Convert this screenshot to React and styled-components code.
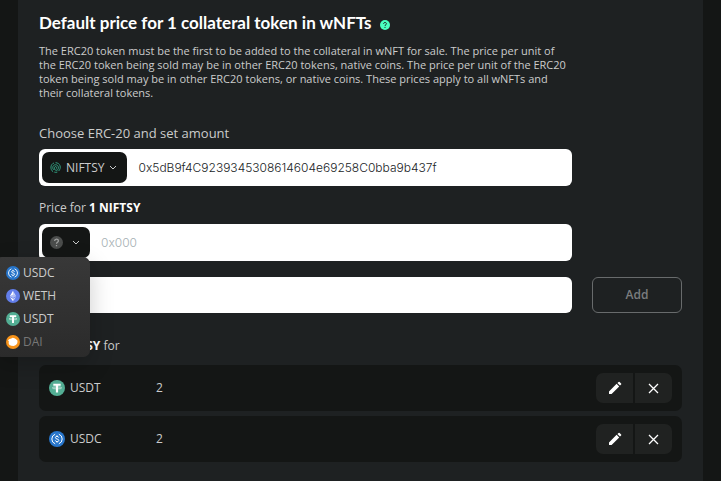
import React from "react";
import styled, { createGlobalStyle } from "styled-components";

const Global = createGlobalStyle`
  * { box-sizing: border-box; }
  body {
    margin: 0;
    background: #141615;
    color: #cbcccc;
    font-family: "Open Sans", sans-serif;
    font-size: 12px;
    line-height: 16px;
    overflow: hidden;
  }
  button, input { font: inherit; margin: 0; }
  h1, p, ul { margin: 0; padding: 0; }
`;

const Panel = styled.main`
  margin: 0 18px;
  padding: 11px 21px 20px;
  min-height: 100vh;
  background: #1e2122;
`;

const Title = styled.h1`
  display: flex;
  align-items: center;
  gap: 8px;
  color: #fff;
  font-family: Lato, "Open Sans", sans-serif;
  font-size: 17px;
  line-height: 24px;
  font-weight: 700;
`;

const HelpButton = styled.button`
  display: flex;
  padding: 3px 0 0;
  border: 0;
  background: none;
`;

const Column = styled.div`
  margin-right: 110px;
`;

const Intro = styled.p`
  margin-top: 9px;
  font-size: 11px;
  line-height: 14px;
`;

const Label = styled.label`
  display: block;
  margin-top: ${(p) => (p.$first ? 25 : 14)}px;
  margin-bottom: 8px;
  font-size: ${(p) => (p.$first ? 13 : 12)}px;

  b { color: #fff; font-weight: 700; }
`;

const Field = styled.div`
  position: relative;
  display: flex;
  align-items: center;
  height: ${(p) => (p.$short ? 36 : 37)}px;
  padding: 3px;
  border-radius: 6px;
  background: #fff;
`;

const Picker = styled.button`
  display: flex;
  flex: none;
  align-items: center;
  gap: ${(p) => (p.$empty ? 9 : 5)}px;
  height: 31px;
  padding: 0 10px 0 8px;
  border: 0;
  border-radius: 7px;
  background: #141615;
  color: #cbcccc;
`;

const Entry = styled.input`
  flex: 1;
  min-width: 0;
  height: 100%;
  padding: 0 11px;
  border: 0;
  outline: 0;
  background: transparent;
  color: #202326;
  font-family: Inter, "Open Sans", sans-serif;
  font-weight: 300;

  &::placeholder { color: #a6b0b4; opacity: 1; }
`;

const AmountRow = styled.div`
  display: grid;
  grid-template-columns: 1fr 90px;
  gap: 20px;
  margin-top: 16px;
`;

const AddButton = styled.button`
  border: 1px solid #686b6c;
  border-radius: 6px;
  background: transparent;
  color: #7b7d7e;
  font-weight: 600;
`;

const Menu = styled.ul`
  position: absolute;
  z-index: 2;
  top: 33px;
  left: -44px;
  width: 95px;
  padding: 4px 0 4px 11px;
  border-radius: 7px;
  background: linear-gradient(#383838, #2b2b2b);
  box-shadow: 0 8px 24px rgba(0, 0, 0, 0.2);
  list-style: none;
`;

const Option = styled.button`
  display: flex;
  align-items: center;
  gap: 3px;
  width: 100%;
  height: 23px;
  padding: 0;
  border: 0;
  background: none;
  color: ${(p) => (p.disabled ? "#777777" : "#cbcccc")};
`;

const Summary = styled.p`
  margin: 25px 0 11px;
  padding-left: 10px;

  b { color: #fff; font-weight: 700; }
`;

const PriceList = styled.ul`
  display: flex;
  flex-direction: column;
  gap: 5px;
  list-style: none;
`;

const PriceRow = styled.li`
  display: grid;
  grid-template-columns: 16px 81px 1fr auto;
  align-items: center;
  gap: 5px;
  height: 46px;
  padding: 0 10px;
  border-radius: 7px;
  background: #141615;
`;

const Actions = styled.div`
  display: flex;
  gap: 2px;
  overflow: hidden;
  border-radius: 7px;
`;

const Action = styled.button`
  display: flex;
  align-items: center;
  justify-content: center;
  width: 37px;
  height: 30px;
  padding: 0;
  border: 0;
  background: #202221;
`;

const HelpIcon = ({ size, fill, ink }) => (
  <svg width={size} height={size} viewBox="0 0 12 12" aria-hidden="true">
    <circle cx="6" cy="6" r="6" fill={fill} />
    <path d="M4.3 4.6c0-2.2 3.4-2.2 3.4-.1C7.700 5.800 6 5.700 6 7.100M6 8.300v1.200" fill="none" stroke={ink} strokeWidth="1.2" />
  </svg>
);

const Chevron = () => (
  <svg width="8" height="6" viewBox="0 0 8 6" aria-hidden="true">
    <path d="M1 1l3 3 3-3" fill="none" stroke="#c8caca" strokeWidth="1" />
  </svg>
);

const NiftsyIcon = () => (
  <svg width="11" height="11" viewBox="0 0 12 12" fill="none" stroke="#36ab8b" strokeWidth="1" aria-hidden="true">
    <path d="M3.400 10.700C-.2 8 .4 2.500 4.300 1.100M6 .8c5.200 0 6.800 5.700 3.400 9.100M8 11c-1 .4-2.400.4-3.300 0" />
    <path d="M4 8.600C2 6.500 3.200 3 6 3s4 3 2.600 5.200C7.700 9.600 5.600 9.300 5 7.900 4.400 6.300 5 5 6.100 5s1.300 1.200.9 2.200" />
  </svg>
);

const glyphs = {
  USDC: {
    fill: "#2775ca",
    art: (
      <g fill="none" stroke="#fff" strokeWidth="1">
        <path d="M6.200 3.200a5.100 5.100 0 0 0 0 9.600M9.800 3.200a5.100 5.100 0 0 1 0 9.600" />
        <path d="M9.700 6.600C9.500 4.900 6.400 4.900 6.400 6.600c0 1.900 3.400.9 3.400 2.800 0 1.700-3.300 1.700-3.500 0M8 4.400v1M8 10.600v1" />
      </g>
    ),
  },
  WETH: {
    fill: "#627eea",
    art: (
      <g fill="#fff">
        <path d="M8 2v4.600l3.600 1.600z" opacity=".65" />
        <path d="M8 2L4.400 8.200 8 6.600zM4.400 9L8 14v-3z" />
        <path d="M8 11v3L11.600 9z" opacity=".65" />
        <path d="M4.400 8.200L8 10.300l3.600-2.100L8 6.600z" opacity=".5" />
      </g>
    ),
  },
  USDT: {
    fill: "#53ae94",
    art: (
      <g>
        <path d="M4.300 3.700h7.400v2H9.100v6.900H6.900V5.700H4.300z" fill="#fff" />
        <ellipse cx="8" cy="7.900" rx="4.600" ry="1" fill="none" stroke="#fff" strokeWidth=".6" />
      </g>
    ),
  },
  DAI: {
    fill: "#f7931a",
    art: <path d="M3.600 4.800L6 4.100l1.700-1 2 .5 1.500 1L13.200 6.500l-.3 3-1.500 2-2.600 1-2.800-.2L4 11.500 3 9.500l.3-2L2.300 6z" fill="#fff" />,
  },
};

const Coin = ({ name, size }) => (
  <svg width={size} height={size} viewBox="0 0 16 16" aria-hidden="true">
    <circle cx="8" cy="8" r="8" fill={glyphs[name].fill} />
    {glyphs[name].art}
  </svg>
);

const PencilIcon = () => (
  <svg width="14" height="14" viewBox="0 0 14 14" fill="#fff" aria-hidden="true">
    <path d="M1 10.400L8.600 2.800l2.600 2.600L3.600 13H1zM9.400 2L10.600.9q.5-.4 1 0l1.500 1.500q.5.5 0 1L12 4.600z" />
  </svg>
);

const CrossIcon = () => (
  <svg width="11" height="11" viewBox="0 0 11 11" aria-hidden="true">
    <path d="M1 1l9 9M10 1L1 10" stroke="#fff" strokeWidth="1.300" />
  </svg>
);

const options = ["USDC", "WETH", "USDT", "DAI"];
const prices = [
  { token: "USDT", amount: "2" },
  { token: "USDC", amount: "2" },
];

export default function App() {
  return (
    <>
      <Global />
      <Panel>
        <Title>
          Default price for 1 collateral token in wNFTs
          <HelpButton type="button" aria-label="Help">
            <HelpIcon size={10} fill="#4affc0" ink="#1e2122" />
          </HelpButton>
        </Title>
        <Column>
          <Intro>
            The ERC20 token must be the first to be added to the collateral in wNFT for sale. The price per unit of
            the ERC20 token being sold may be in other ERC20 tokens, native coins. The price per unit of the ERC20
            token being sold may be in other ERC20 tokens, or native coins. These prices apply to all wNFTs and
            their collateral tokens.
          </Intro>
          <Label $first htmlFor="collateral">Choose ERC-20 and set amount</Label>
          <Field>
            <Picker type="button">
              <NiftsyIcon />
              NIFTSY
              <Chevron />
            </Picker>
            <Entry id="collateral" defaultValue="0x5dB9f4C9239345308614604e69258C0bba9b437f" />
          </Field>
          <Label htmlFor="price">
            Price for <b>1 NIFTSY</b>
          </Label>
          <Field>
            <Picker $empty type="button" aria-label="Choose token" aria-expanded="true">
              <HelpIcon size={13} fill="#4b4d4c" ink="#a0a2a1" />
              <Chevron />
            </Picker>
            <Entry id="price" placeholder="0x000" />
            <Menu>
              {options.map((name) => (
                <li key={name}>
                  <Option type="button" disabled={name === "DAI"}>
                    <Coin name={name} size={14} />
                    {name}
                  </Option>
                </li>
              ))}
            </Menu>
          </Field>
        </Column>
        <AmountRow>
          <Field $short>
            <Entry aria-label="Amount" />
          </Field>
          <AddButton type="button">Add</AddButton>
        </AmountRow>
        <Summary>
          <b>1 NIFTSY</b> for
        </Summary>
        <PriceList>
          {prices.map(({ token, amount }) => (
            <PriceRow key={token}>
              <Coin name={token} size={16} />
              <span>{token}</span>
              <span>{amount}</span>
              <Actions>
                <Action type="button" aria-label={`Edit ${token} price`}>
                  <PencilIcon />
                </Action>
                <Action type="button" aria-label={`Remove ${token} price`}>
                  <CrossIcon />
                </Action>
              </Actions>
            </PriceRow>
          ))}
        </PriceList>
      </Panel>
    </>
  );
}
